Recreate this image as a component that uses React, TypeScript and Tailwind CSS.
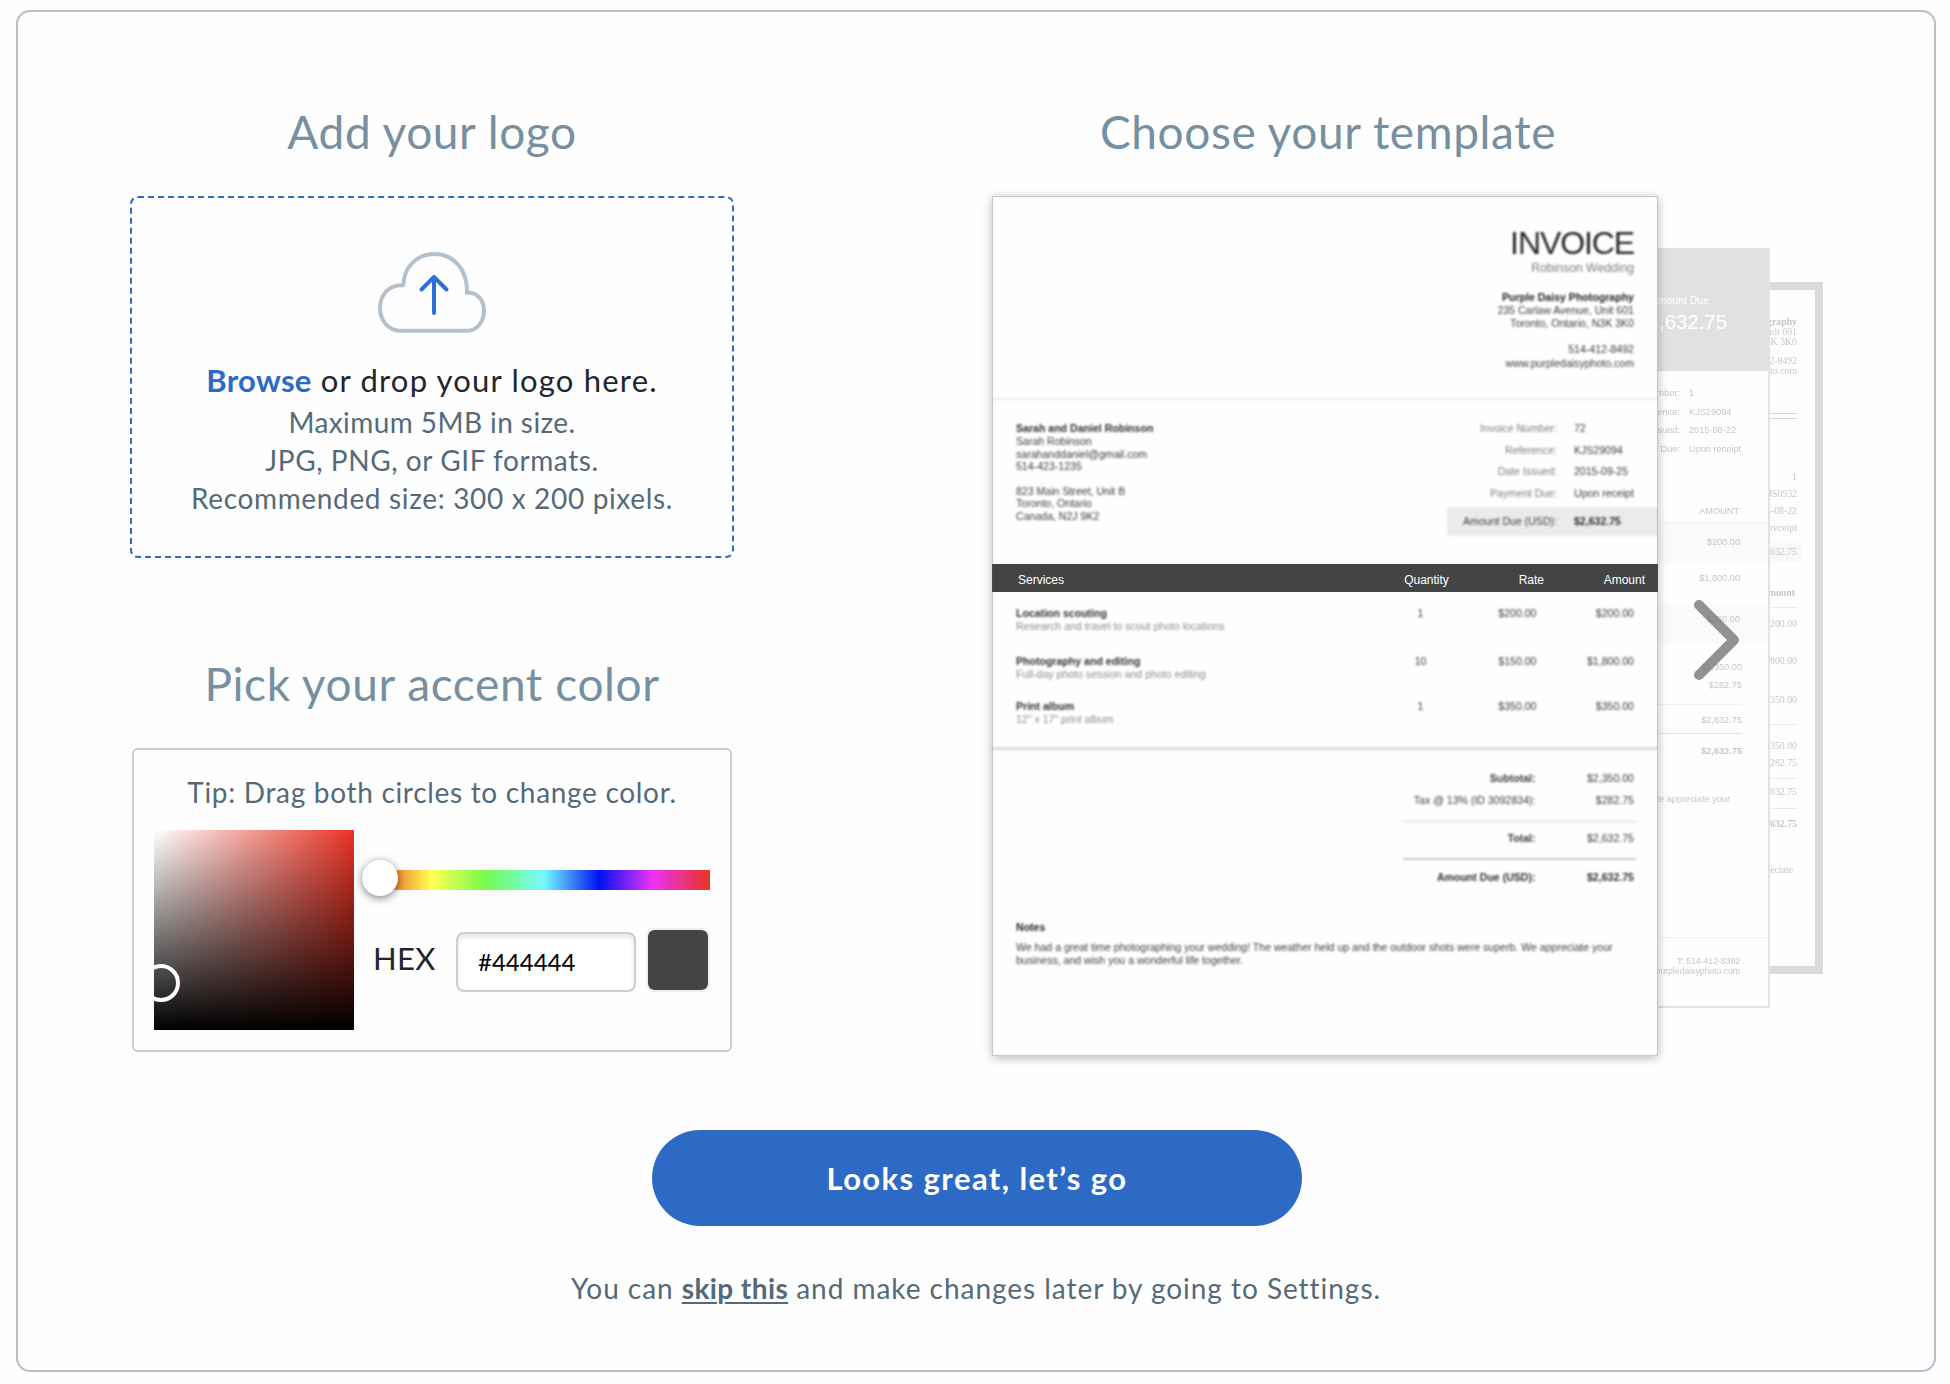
import type { ReactNode } from "react";

function Heading({ children }: { children: ReactNode }) {
  return (
    <h2 className="h-14 whitespace-nowrap pt-0.5 text-center text-[46px] leading-[56px] tracking-[0.6px] text-[#768fa1]">
      {children}
    </h2>
  );
}

function CloudUpload() {
  return (
    <svg width="110" height="84" viewBox="0 0 110 84" fill="none">
      <path
        d="M26.5 34.5C26.5 16 40 3 57.500 3C76 3 90.500 18 90 41.500C100.500 41.500 107 49 107 59.500C107 71 99.500 79.700 90.500 79.700H23C11.500 79.700 3 69.500 3 57C3 43.500 12 34.300 24 34.300H27.500"
        stroke="#b4c1cd"
        strokeWidth="4"
      />
      <path d="M57 62V26M44.500 38.500L57 26L69.500 38.500" stroke="#2b70d8" strokeWidth="4" strokeLinecap="round" strokeLinejoin="round" />
    </svg>
  );
}

function LogoDrop() {
  return (
    <div className="mt-[38px] flex h-[362px] w-[604px] flex-col items-center whitespace-nowrap rounded-lg border-2 border-dashed border-[#2c6ac6] pt-[53px]">
      <CloudUpload />
      <p className="mt-6 flex h-11 gap-[9px] text-[31px] leading-[42px] text-[#1f262e]">
        <b className="font-bold tracking-[0.3px] text-[#2c6ac6]">Browse</b>
        <span className="tracking-[1.2px]">or drop your logo here.</span>
      </p>
      <p className="text-[28px] leading-[38px] tracking-[0.43px] text-[#546a79]">Maximum 5MB in size.</p>
      <p className="text-[28px] leading-[38px] tracking-[0.57px] text-[#546a79]">JPG, PNG, or GIF formats.</p>
      <p className="text-[28px] leading-[38px] tracking-[0.66px] text-[#546a79]">Recommended size: 300 x 200 pixels.</p>
    </div>
  );
}

function ColorPicker() {
  return (
    <div className="ml-0.5 mt-[38px] h-[304px] w-[600px] rounded-md border-2 border-[#cbcccd] pt-[25px]">
      <p className="whitespace-nowrap text-center text-[28px] leading-[34px] tracking-[0.69px] text-[#546a79]">
        Tip: Drag both circles to change color.
      </p>
      <div className="mt-[21px] flex gap-2 pl-5">
        <div className="relative size-[200px] shrink-0 overflow-hidden bg-[#ea3323]">
          <div className="absolute inset-0 bg-[linear-gradient(to_right,#fff,rgba(255,255,255,0))]" />
          <div className="absolute inset-0 bg-[linear-gradient(to_top,#000,rgba(0,0,0,0))]" />
          <div className="absolute -left-3 top-[134px] size-[38px] rounded-full border-4 border-white" />
        </div>
        <div className="pt-10">
          <div className="relative ml-2 h-5 w-[340px] bg-[linear-gradient(to_right,#ea3323_0%,#ffff54_18%,#75fb4c_34%,#75fbfd_51%,#0011f5_67.5%,#ea33f7_83%,#ea3323_100%)]">
            <div className="absolute -left-2 -top-2.5 size-9 rounded-full bg-white shadow-[0_2px_8px_rgba(0,0,0,0.5)]" />
          </div>
          <div className="mt-[38px] flex items-start">
            <span className="ml-[11px] mt-[10px] w-[83px] text-[31px] leading-10 tracking-[0.4px] text-[#1f262e]">HEX</span>
            <input
              defaultValue="#444444"
              className="mt-1 h-[60px] w-[180px] rounded-lg border-2 border-[#c9cdd0] bg-white pb-px pl-[20px] text-[24px] text-black shadow-[inset_0_3px_5px_rgba(0,0,0,0.1)] outline-none"
            />
            <div className="ml-2.5 size-16 rounded-lg border-2 border-[#eeeeee] bg-[#444444] bg-clip-padding" />
          </div>
        </div>
      </div>
    </div>
  );
}

const DETAILS = [
  ["Invoice Number:", "72"],
  ["Reference:", "KJS29094"],
  ["Date Issued:", "2015-09-25"],
  ["Payment Due:", "Upon receipt"],
];

const ITEMS = [
  { name: "Location scouting", note: "Research and travel to scout photo locations", qty: "1", rate: "$200.00", amount: "$200.00", cls: "h-12" },
  { name: "Photography and editing", note: "Full-day photo session and photo editing", qty: "10", rate: "$150.00", amount: "$1,800.00", cls: "h-[45px]" },
  { name: "Print album", note: '12" x 17" print album', qty: "1", rate: "$350.00", amount: "$350.00", cls: "h-[45px]" },
];

function TotalRow({ label, value, cls, valueCls }: { label: string; value: string; cls: string; valueCls: string }) {
  return (
    <div className={"flex justify-end pr-0.5 leading-[13px] " + cls}>
      <span>{label}</span>
      <span className={"w-[98.5px] text-right " + valueCls}>{value}</span>
    </div>
  );
}

function InvoiceSheet() {
  return (
    <article className="relative h-[860px] w-[666px] whitespace-nowrap bg-[#fefefe] font-['Liberation_Sans',Arial,sans-serif] text-[10.57px] text-[#363d42] shadow-[0_2px_10px_rgba(0,0,0,0.28)]">
      <div className="blur-[0.8px]">
        <header className="flex h-[204px] flex-col items-end border-b-2 border-[#e9ecec] pr-6 pt-[29px] leading-[13px]">
          <h3 className="text-[32px] leading-9 tracking-[-1.1px] text-[#24292d]">INVOICE</h3>
          <p className="text-[12.2px] leading-[14px] text-[#75818a]">Robinson Wedding</p>
          <b className="mt-4 text-[#1b2024]">Purple Daisy Photography</b>
          <p>235 Carlaw Avenue, Unit 601</p>
          <p>Toronto, Ontario, N3K 3K0</p>
          <p className="mt-[13px]">514-412-8492</p>
          <p className="mt-px">www.purpledaisyphoto.com</p>
        </header>
        <section className="flex h-[164px] justify-between">
          <div className="pl-6 pt-[22px] leading-[12.75px]">
            <b className="block text-[#2b3135]">Sarah and Daniel Robinson</b>
            <p>Sarah Robinson</p>
            <p>sarahanddaniel@gmail.com</p>
            <p>514-423-1235</p>
            <p className="mt-[11.5px]">823 Main Street, Unit B</p>
            <p>Toronto, Ontario</p>
            <p>Canada, N2J 9K2</p>
          </div>
          <div className="w-[211px] pt-[18px]">
            {DETAILS.map(([label, value]) => (
              <div key={label} className="flex gap-[17px] leading-[21.6px]">
                <span className="w-[110px] text-right text-[#75818a]">{label}</span>
                <span>{value}</span>
              </div>
            ))}
            <div className="mt-[3px] flex gap-[17px] rounded-l bg-[#ebebeb] leading-[29px]">
              <span className="w-[110px] text-right">Amount Due (USD):</span>
              <b className="text-[#2b3135]">$2,632.75</b>
            </div>
          </div>
        </section>
      </div>
      <div className="grid h-7 grid-cols-[1fr_45px_95px_101px] items-center bg-[#444444] pl-[26px] pr-[13px] pt-1 text-[12px] leading-4 text-white">
        <span>Services</span>
        <span className="text-center">Quantity</span>
        <span className="text-right">Rate</span>
        <span className="text-right">Amount</span>
      </div>
      <div className="blur-[0.8px]">
        <section className="h-[158px] border-b-[3px] border-[#d9dcdc] pt-[14.5px] leading-[13px]">
          {ITEMS.map((item) => (
            <div key={item.name} className={"grid grid-cols-[1fr_45px_93.5px_97.5px] pl-6 pr-6 " + item.cls}>
              <div>
                <b className="block text-[#2b3135]">{item.name}</b>
                <p className="text-[#858f96]">{item.note}</p>
              </div>
              <span className="text-center">{item.qty}</span>
              <span className="text-right">{item.rate}</span>
              <span className="text-right">{item.amount}</span>
            </div>
          ))}
        </section>
        <section className="ml-auto mr-[22px] w-[233px] pt-[22px]">
          <TotalRow label="Subtotal:" value="$2,350.00" cls="font-bold" valueCls="font-normal" />
          <TotalRow label="Tax @ 13% (ID 3092834):" value="$282.75" cls="mt-[9px]" valueCls="" />
          <div className="mt-[14px] h-px bg-[#d5d9d9]" />
          <TotalRow label="Total:" value="$2,632.75" cls="mt-[10px] font-bold" valueCls="font-normal" />
          <div className="mt-[13px] h-0.5 bg-[#c6cccc]" />
          <TotalRow label="Amount Due (USD):" value="$2,632.75" cls="mt-[11px] font-bold text-[#2b3135]" valueCls="" />
        </section>
        <footer className="pl-6 pt-[37px] leading-[13px]">
          <b className="block text-[#1b2024]">Notes</b>
          <p className="mt-[7px]">
            We had a great time photographing your wedding! The weather held up and the outdoor shots were superb. We appreciate your
            <br />
            business, and wish you a wonderful life together.
          </p>
        </footer>
      </div>
      <div className="pointer-events-none absolute inset-0 shadow-[inset_0_0_1px_1px_rgba(90,95,95,0.35)]" />
    </article>
  );
}

const BANNER_SHEET_DETAILS = [
  ["Number:", "1"],
  ["Reference:", "KJS29094"],
  ["Issued:", "2015-08-22"],
  ["Due:", "Upon receipt"],
];

function BannerSheet() {
  return (
    <article className="absolute left-[600px] top-[52px] h-[760px] w-[178px] overflow-hidden whitespace-nowrap border-2 border-[#dfe3e3] bg-[#fefefe] text-right font-['Liberation_Sans',Arial,sans-serif] text-[9.2px] leading-3 text-[#c3c6c8]">
      <div className="h-[121px] bg-[#e1e1e1] pt-11 text-white">
        <p className="pr-[59px] text-[10.5px] leading-[13px]">Amount Due</p>
        <p className="mt-[3px] pr-[41px] text-[20.4px] leading-6">$2,632.75</p>
      </div>
      <div className="blur-[0.6px]">
        <div className="pt-[13.3px]">
          {BANNER_SHEET_DETAILS.map(([label, value]) => (
            <div key={label} className="flex justify-end gap-[9px] leading-[18.5px]">
              <span>{label}</span>
              <span className="w-[79px] text-left">{value}</span>
            </div>
          ))}
        </div>
        <p className="mt-[47px] pr-[29px]">AMOUNT</p>
        <p className="mt-[5px] h-[41px] border-t border-[#f5f5f5] bg-[#fafafa] pr-7 leading-[38px]">$200.00</p>
        <p className="h-[42px] pr-7 leading-[30px]">$1,800.00</p>
        <p className="h-[39px] bg-[#fafafa] pr-7 leading-[28px]">$350.00</p>
        <p className="mt-[17px] pr-[26px]">$2,350.00</p>
        <p className="mt-1.5 pr-[26px]">$282.75</p>
        <div className="mr-[26px] mt-[13px] h-px bg-[#f0f0f0]" />
        <p className="mt-[9px] pr-[26px]">$2,632.75</p>
        <div className="mr-[26px] mt-[7px] h-px bg-[#e2e4e4]" />
        <p className="mt-[11px] pr-[26px] font-bold">$2,632.75</p>
        <p className="mt-9 pr-[38px]">We appreciate your</p>
        <div className="mt-[132px] h-px bg-[#f2f2f2]" />
        <div className="pr-7 pt-[19px] text-[8.65px] leading-[9.5px]">
          <p>T: 514-412-8392</p>
          <p>purpledaisyphoto.com</p>
        </div>
      </div>
    </article>
  );
}

function FramedSheet() {
  return (
    <article className="absolute left-[740px] top-[86px] h-[692px] w-[91px] overflow-hidden whitespace-nowrap border-8 border-[#d9dada] bg-[#fefefe] text-right font-['Liberation_Serif',Georgia,serif] text-[9.8px] leading-[10px] text-[#c3c6c8]">
      <div className="pr-[18px] blur-[0.6px]">
        <b className="mt-[27px] block">graphy</b>
        <p>Unit 601</p>
        <p>3K 3K0</p>
        <p className="mt-[9px]">2-8492</p>
        <p>to.com</p>
        <div className="mt-[37px] h-[6px] border-y border-[#d3d6d6]" />
        <div className="mt-[49px] leading-[17px]">
          <p>1</p>
          <p>JS0932</p>
          <p>5-08-22</p>
          <p>receipt</p>
        </div>
        <p className="-mr-1.5 mt-[5px] rounded bg-[#f8f8f8] pr-1.5 pt-px leading-5">632.75</p>
        <b className="mt-[26px] block pr-0.5">mount</b>
        <div className="mt-[9px] h-px bg-[#ebebeb]" />
        <p className="mt-[11px]">200.00</p>
        <p className="mt-[27px]">800.00</p>
        <p className="mt-[29px]">350.00</p>
        <div className="mt-[19px] h-px bg-[#ebebeb]" />
        <p className="mt-4">350.00</p>
        <p className="mt-[7px]">282.75</p>
        <div className="mt-2.5 h-px bg-[#ebebeb]" />
        <p className="mt-2">632.75</p>
        <div className="mt-[11px] h-px bg-[#e6eaea]" />
        <b className="mt-2.5 block">632.75</b>
        <p className="mt-9 pr-1">eciate</p>
      </div>
    </article>
  );
}

function TemplateStack() {
  return (
    <div className="relative mt-[38px] w-[831px]">
      <FramedSheet />
      <BannerSheet />
      <InvoiceSheet />
      <button aria-label="Next template" className="absolute left-[697px] top-[399px]">
        <svg width="56" height="90" viewBox="0 0 56 90" fill="none">
          <path d="M10 10L45 45L10 80" stroke="#6f7579" strokeOpacity="0.78" strokeWidth="10" strokeLinecap="round" strokeLinejoin="round" />
        </svg>
      </button>
    </div>
  );
}

export default function App() {
  return (
    <div className="h-[1384px] w-[1950px] bg-[#fdfdfd] pl-4 pt-2.5 font-['Lato',sans-serif]">
      <main className="flex h-[1362px] w-[1920px] flex-col rounded-[14px] border-2 border-[#b4c1cd] bg-[#fefefe] pt-[90px]">
        <div className="flex gap-[258px] pl-28">
          <section className="w-[604px]">
            <Heading>Add your logo</Heading>
            <LogoDrop />
            <div className="h-24" />
            <Heading>Pick your accent color</Heading>
            <ColorPicker />
          </section>
          <section className="h-[954px]">
            <div className="w-[672px]">
              <Heading>Choose your template</Heading>
            </div>
            <TemplateStack />
          </section>
        </div>
        <div className="mt-[74px] flex flex-col items-center whitespace-nowrap">
          <button className="ml-0.5 h-24 w-[650px] rounded-full bg-[#2c6ac6] text-[31px] font-bold tracking-[1.42px] text-white">
            Looks great, let’s go
          </button>
          <p className="mt-[45px] text-[28px] leading-[34px] tracking-[0.96px] text-[#546a79]">
            You can <a className="font-bold tracking-[0.4px] underline decoration-2 underline-offset-[3px]">skip this</a> and make changes later by going to Settings.
          </p>
        </div>
      </main>
    </div>
  );
}
